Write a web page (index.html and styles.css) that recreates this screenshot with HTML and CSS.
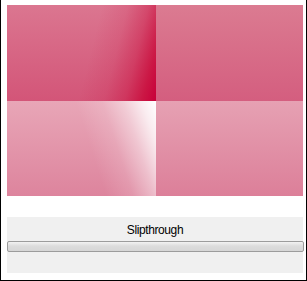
FILE: index.html
```html
<!DOCTYPE html>
<html lang="en">
  <head>
    <meta charset="UTF-8" />
    <title>Slipthrough</title>
    <link rel="stylesheet" href="styles.css">
  </head>
  <body>
    <div class="frame">
      <div class="canvas">
        <div class="tile tile-tl"></div>
        <div class="tile tile-tr"></div>
        <div class="tile tile-bl"></div>
        <div class="tile tile-br"></div>
      </div>
      <div class="panel">
        <div class="label">Slipthrough</div>
        <div class="slider"></div>
      </div>
    </div>
  </body>
</html>
```

FILE: styles.css
```css
* {
  margin: 0;
  padding: 0;
  box-sizing: border-box;
}
body {
  background: #fff;
  font-family: "Liberation Sans", Arial, sans-serif;
}
.frame {
  width: 307px;
  height: 281px;
  border: 1px solid #000;
  border-top: none;
  padding: 5px 3px 0 6px;
  background: #fff;
}
.canvas {
  display: grid;
  grid-template-columns: 149px 147px;
  grid-template-rows: 96px 95px;
  width: 296px;
}
.tile-tl {
  background:
    linear-gradient(104deg,
      rgba(200, 0, 50, 0) 55%,
      rgba(200, 0, 50, 0.12) 70%,
      rgba(200, 0, 50, 0.38) 82%,
      rgba(200, 0, 50, 0.75) 92%,
      #c8003a 100%),
    linear-gradient(to bottom, #db7690, #d35578);
}
.tile-tr {
  background: linear-gradient(to bottom, #db7b91, #d45e7f);
}
.tile-bl {
  background:
    linear-gradient(72deg,
      rgba(255, 255, 255, 0) 55%,
      rgba(255, 255, 255, 0.15) 70%,
      rgba(255, 255, 255, 0.45) 82%,
      rgba(255, 255, 255, 0.8) 92%,
      #fff 100%),
    linear-gradient(to bottom, #e8a6b7, #dd849d);
}
.tile-br {
  background: linear-gradient(to bottom, #e6a1b3, #dc7f99);
}
.panel {
  margin-top: 21px;
  width: 296px;
  height: 56px;
  background: #f0f0f0;
  padding-top: 6px;
}
.label {
  text-align: center;
  font-size: 12px;
  line-height: 14px;
  letter-spacing: -0.4px;
  color: #000;
}
.slider {
  margin-top: 4px;
  width: 297px;
  height: 11px;
  border: 1px solid #9c9c9c;
  border-radius: 2px;
  background: linear-gradient(to bottom, #f2f2f2, #dcdcdc 45%, #d6d6d6);
}
```
